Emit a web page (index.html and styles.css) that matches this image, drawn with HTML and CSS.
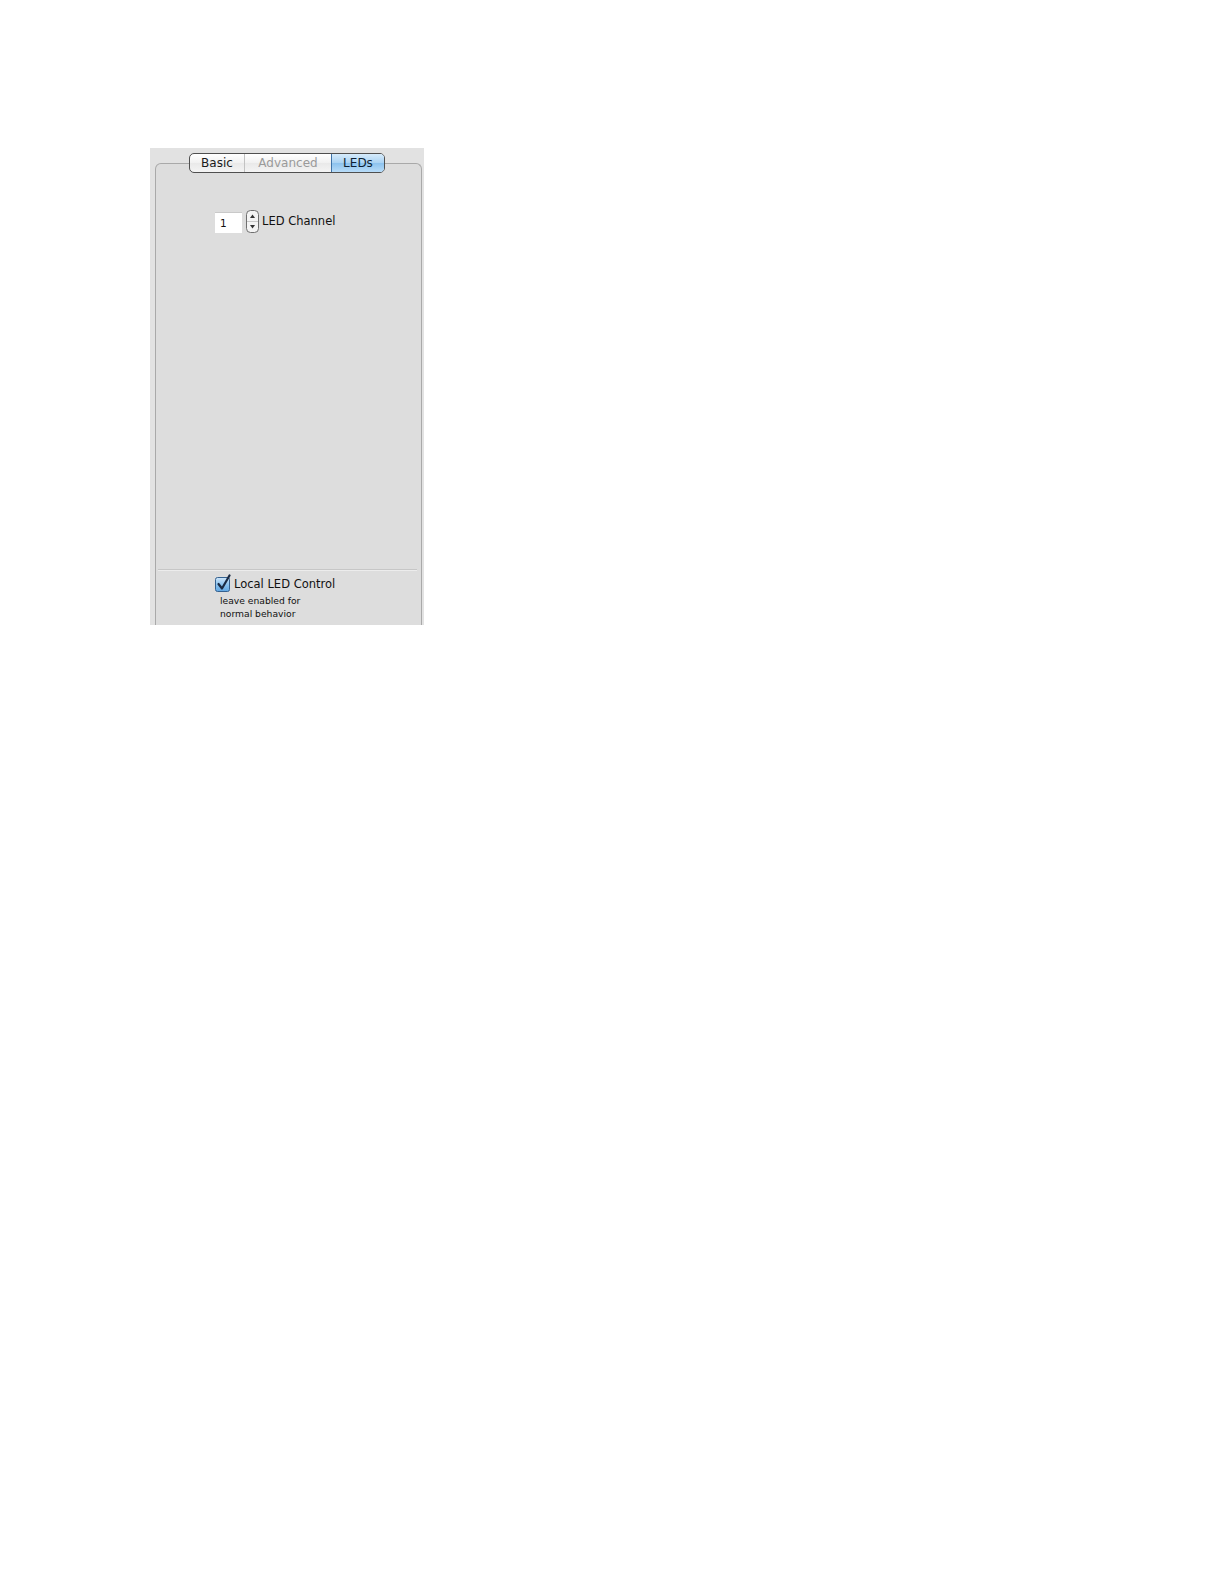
FILE: index.html
```html
<!DOCTYPE html>
<html>
<head>
<meta charset="utf-8">
<link rel="stylesheet" href="styles.css">
</head>
<body>
<div class="panel">
  <div class="tabs">
    <div class="tab tab-basic">Basic</div>
    <div class="tab tab-adv">Advanced</div>
    <div class="tab tab-leds">LEDs</div>
  </div>
  <div class="box">
    <div class="main">
      <div class="row">
        <div class="numfield">1</div>
        <div class="stepper">
          <svg width="13" height="23" viewBox="0 0 13 23">
            <rect x="0.5" y="0.5" width="12" height="22" rx="4" ry="4" fill="#f4f4f4" stroke="#6f6f6f"/>
            <line x1="1" y1="11.5" x2="12" y2="11.5" stroke="#c8c8c8"/>
            <path d="M4 8 L6.5 4.5 L9 8 Z" fill="#333"/>
            <path d="M4 15 L6.5 18.5 L9 15 Z" fill="#333"/>
          </svg>
        </div>
        <span class="label">LED Channel</span>
      </div>
    </div>
    <div class="sep"></div>
    <div class="footer">
      <div class="checkrow">
        <svg class="check" width="17" height="18" viewBox="0 0 17 18">
          <defs>
            <linearGradient id="cg" x1="0" y1="0" x2="0" y2="1">
              <stop offset="0" stop-color="#cfe6fa"/>
              <stop offset="0.5" stop-color="#8cc3ee"/>
              <stop offset="1" stop-color="#5fa6e3"/>
            </linearGradient>
          </defs>
          <rect x="0.5" y="3.5" width="14" height="14" rx="2" ry="2" fill="url(#cg)" stroke="#35618f"/>
          <path d="M3.5 10 L7 14.5 L14.5 1.5" fill="none" stroke="#1b2b44" stroke-width="2.2" stroke-linecap="round" stroke-linejoin="round"/>
        </svg>
        <span class="cblabel">Local LED Control</span>
      </div>
      <div class="hint">leave enabled for<br>normal behavior</div>
    </div>
  </div>
</div>
</body>
</html>
```
FILE: styles.css
```css
html, body {
  margin: 0;
  padding: 0;
  background: #ffffff;
}
body {
  font-family: "DejaVu Sans", "Liberation Sans", sans-serif;
  color: #111;
}
.panel {
  margin: 148px 0 0 150px;
  width: 274px;
  height: 477px;
  background: #e2e2e2;
  display: flex;
  flex-direction: column;
  overflow: hidden;
  padding-top: 5px;
  box-sizing: border-box;
}
.tabs {
  align-self: flex-start;
  margin-left: 39px;
  display: flex;
  height: 20px;
  border: 1px solid #4f4f4f;
  border-radius: 5px;
  box-sizing: border-box;
  overflow: hidden;
  position: relative;
  z-index: 1;
  background: linear-gradient(#ffffff, #f1f1f1 50%, #e9e9e9 51%, #f4f4f4);
}
.tab {
  font-size: 12px;
  line-height: 18px;
  text-align: center;
  box-sizing: border-box;
}
.tab-basic {
  width: 55px;
  color: #1a1a1a;
  border-right: 1px solid #c2c2c2;
}
.tab-adv {
  width: 86px;
  color: #9a9a9a;
}
.tab-leds {
  width: 53px;
  color: #0d1f33;
  background: linear-gradient(#d6ebfb, #a9d2f3 50%, #8cc2ee 51%, #b8dcf8);
  border-left: 1px solid #3f73a8;
}
.box {
  margin: -10px 2px 0 5px;
  flex: 1;
  border: 1px solid #a9a9a9;
  border-bottom: none;
  border-radius: 6px 6px 0 0;
  background: #dddddd;
  display: flex;
  flex-direction: column;
}
.main {
  height: 405px;
  padding-top: 45px;
  box-sizing: border-box;
}
.row {
  display: flex;
  align-items: center;
  margin-left: 59px;
  height: 24px;
}
.numfield {
  width: 27px;
  height: 21px;
  background: #ffffff;
  border-top: 1px solid #c9c9c9;
  box-sizing: border-box;
  font-size: 10.5px;
  line-height: 20px;
  padding-left: 5px;
  margin-top: 2px;
}
.stepper {
  margin-left: 4px;
  width: 13px;
  height: 23px;
  display: flex;
}
.label {
  margin-left: 3px;
  font-size: 11.5px;
  color: #111;
}
.sep {
  margin: 0 4px 0 2px;
  border-top: 1px solid #c6c6c6;
  border-bottom: 1px solid #ececec;
}
.footer {
  padding-top: 3px;
  padding-left: 59px;
}
.checkrow {
  display: flex;
  align-items: flex-end;
  height: 18px;
}
.check {
  display: block;
}
.cblabel {
  margin-left: 2px;
  font-size: 11.5px;
  line-height: 16px;
  color: #111;
}
.hint {
  margin-left: 5px;
  margin-top: 2px;
  font-size: 9.2px;
  line-height: 13px;
  color: #111;
}
```
